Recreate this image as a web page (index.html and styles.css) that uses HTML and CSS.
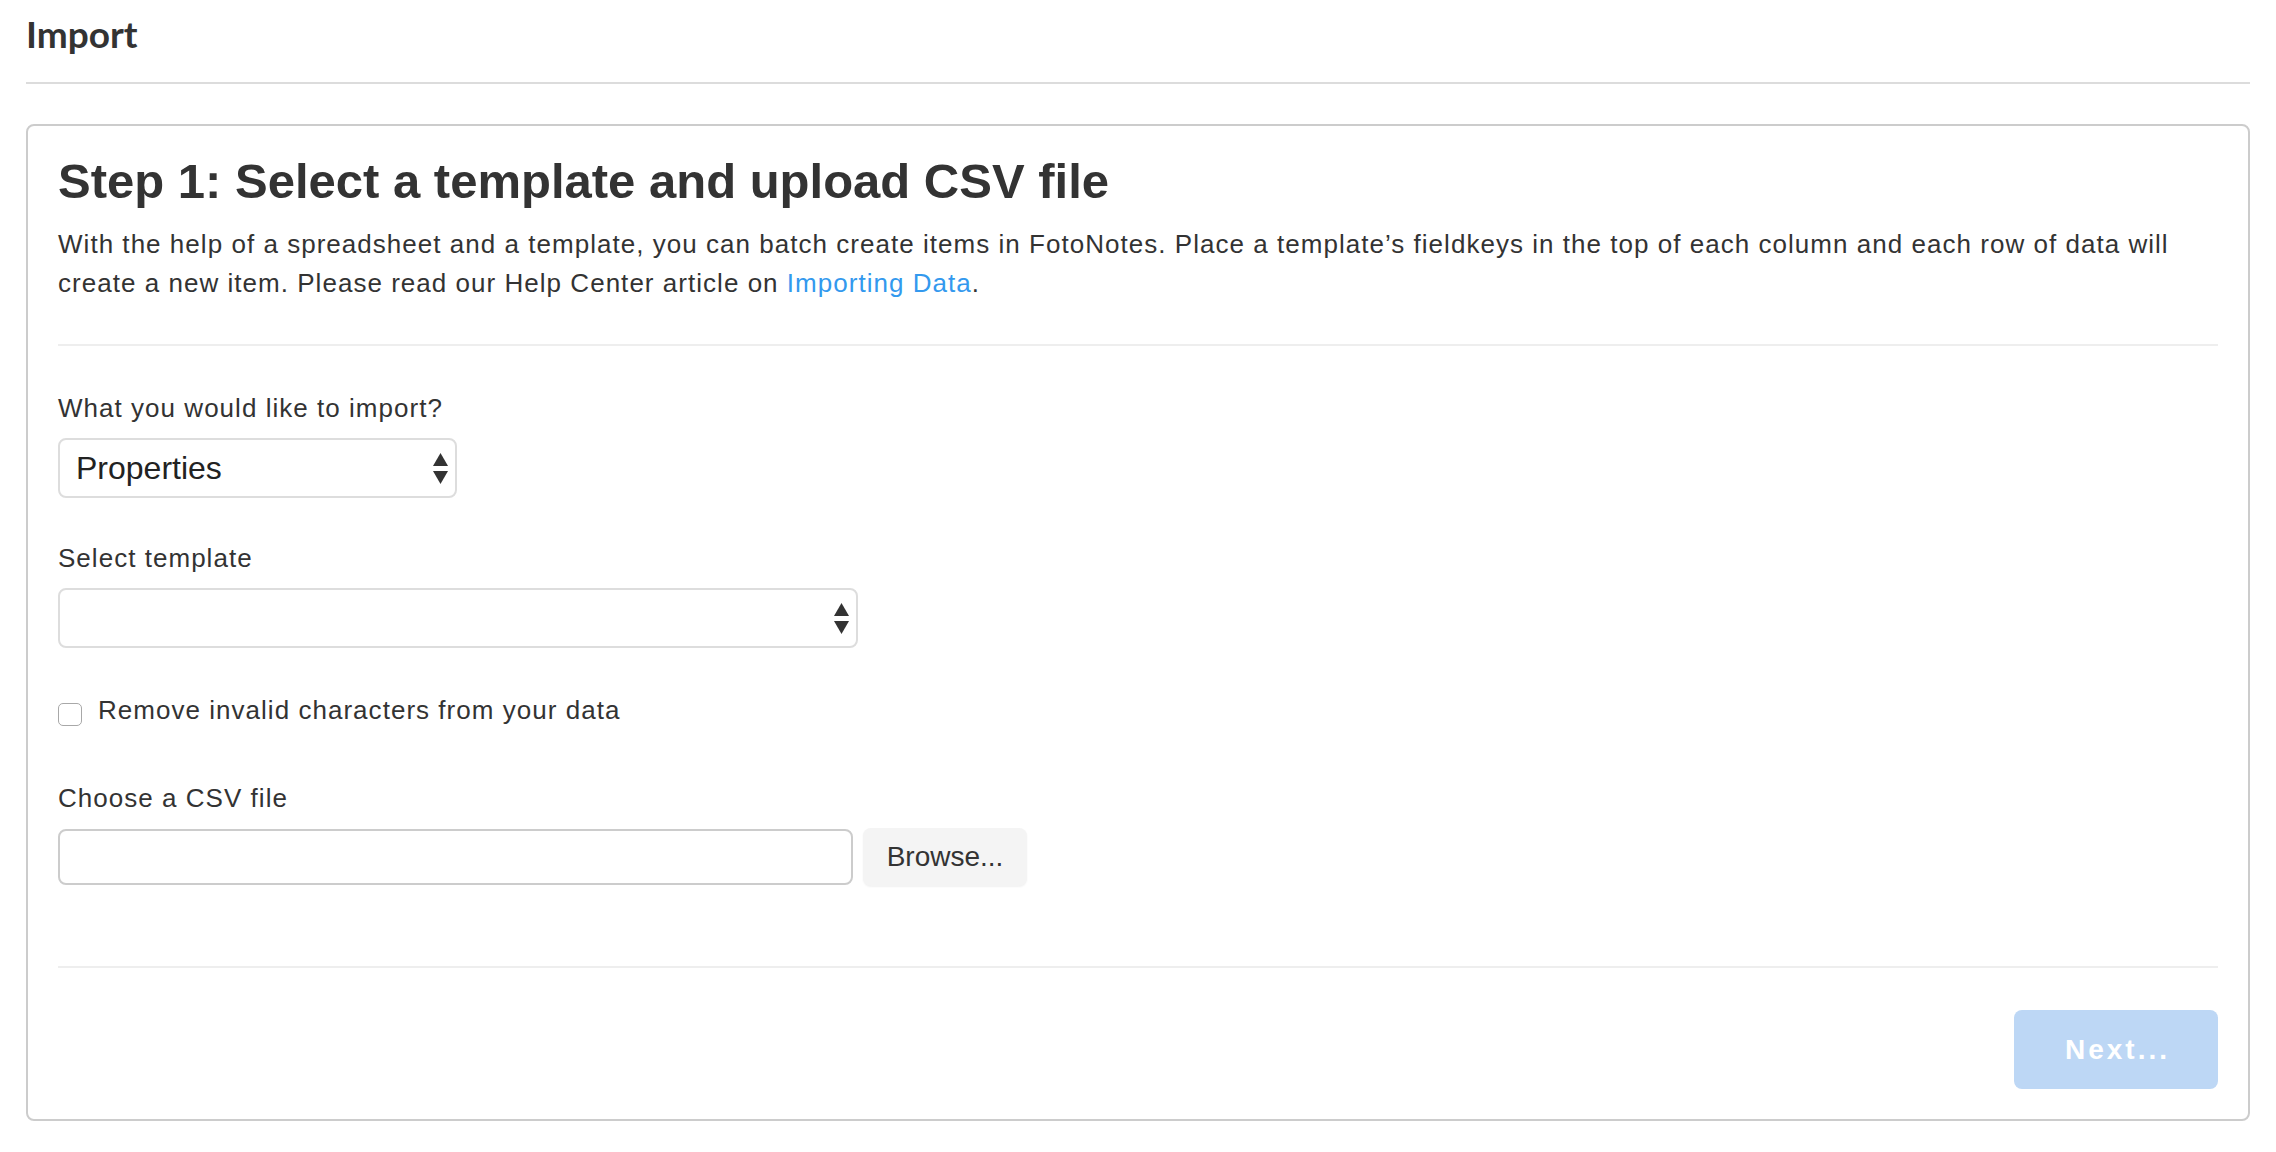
FILE: index.html
```html
<!DOCTYPE html>
<html lang="en">
<head>
<meta charset="utf-8">
<title>Import</title>
<link rel="stylesheet" href="styles.css">
</head>
<body>
<div class="page">
  <h1 class="page-title">Import</h1>
  <div class="title-rule"></div>
  <div class="card">
    <h2 class="step-title">Step 1: Select a template and upload CSV file</h2>
    <p class="intro">With the help of a spreadsheet and a template, you can batch create items in FotoNotes. Place a template’s fieldkeys in the top of each column and each row of data will create a new item. Please read our Help Center article on <a class="link" href="#">Importing Data</a>.</p>
    <div class="rule rule-top"></div>
    <div class="form">
      <div class="group">
        <label class="label">What you would like to import?</label>
        <div class="select-wrap select-small">
          <select class="select"><option>Properties</option></select>
          <svg class="arrows" width="15" height="32" viewBox="0 0 15 32"><polygon points="7.5,0 15,13 0,13"/><polygon points="0,18 15,18 7.5,31"/></svg>
        </div>
      </div>
      <div class="group">
        <label class="label">Select template</label>
        <div class="select-wrap select-wide">
          <select class="select"><option></option></select>
          <svg class="arrows" width="15" height="32" viewBox="0 0 15 32"><polygon points="7.5,0 15,13 0,13"/><polygon points="0,18 15,18 7.5,31"/></svg>
        </div>
      </div>
      <div class="group check-group">
        <input type="checkbox" class="checkbox" id="rm">
        <label class="check-label" for="rm">Remove invalid characters from your data</label>
      </div>
      <div class="group file-group">
        <label class="label">Choose a CSV file</label>
        <div class="file-row">
          <input type="text" class="file-input" readonly>
          <button class="browse" type="button">Browse...</button>
        </div>
      </div>
    </div>
    <div class="rule rule-bottom"></div>
    <div class="actions">
      <button class="next" type="button">Next...</button>
    </div>
  </div>
</div>
</body>
</html>
```

FILE: styles.css
```css
html, body {
  margin: 0;
  padding: 0;
  background: #fff;
}
body {
  font-family: "Liberation Sans", Arial, Helvetica, sans-serif;
  color: #333;
}
.page {
  padding: 0 26px;
}
.page-title {
  font-family: Lato, "Liberation Sans", sans-serif;
  font-weight: 700;
  font-size: 37px;
  line-height: 43px;
  margin: 12px 0 27px;
  color: #333;
}
.title-rule {
  height: 2px;
  background: #dcdcdc;
}
.card {
  margin-top: 40px;
  border: 2px solid #cccccc;
  border-radius: 8px;
  padding: 28px 30px 30px;
}
.step-title {
  font-size: 49px;
  font-weight: 700;
  line-height: 55px;
  margin: 0 0 16px;
  color: #333;
}
.intro {
  font-size: 26px;
  line-height: 39px;
  letter-spacing: 1.03px;
  margin: 0;
}
.link {
  color: #3399ee;
  text-decoration: none;
}
.rule {
  height: 2px;
  background: #eeeeee;
}
.rule-top {
  margin-top: 41px;
}
.form {
  padding-top: 43px;
}
.group {
  margin-bottom: 41px;
}
.label {
  display: block;
  font-size: 26px;
  line-height: 39px;
  letter-spacing: 1.03px;
  margin-bottom: 10px;
}
.select-wrap {
  position: relative;
  height: 60px;
}
.select-small { width: 399px; }
.select-wide { width: 800px; }
.select {
  appearance: none;
  -webkit-appearance: none;
  box-sizing: border-box;
  width: 100%;
  height: 60px;
  border: 2px solid #dddddd;
  border-radius: 8px;
  background: #fff;
  font-family: "Liberation Sans", Arial, sans-serif;
  font-size: 32px;
  line-height: 56px;
  color: #222;
  padding: 0 40px 0 16px;
  margin: 0;
}
.arrows {
  position: absolute;
  right: 9px;
  top: 15px;
  fill: #333;
  pointer-events: none;
}
.check-group {
  display: flex;
  align-items: flex-start;
  margin-top: 43px;
  margin-bottom: 49px;
}
.checkbox {
  appearance: none;
  -webkit-appearance: none;
  box-sizing: border-box;
  width: 24px;
  height: 23px;
  margin: 12px 16px 0 0;
  border: 1.5px solid #a8a8a8;
  border-radius: 5px;
  background: #fff;
  flex: none;
}
.check-label {
  font-size: 26px;
  line-height: 39px;
  letter-spacing: 1.03px;
}
.file-group {
  margin-bottom: 80px;
}
.file-row {
  display: flex;
  align-items: center;
  gap: 10px;
}
.file-input {
  box-sizing: border-box;
  width: 795px;
  height: 56px;
  border: 2px solid #cccccc;
  border-radius: 8px;
  background: #fff;
  margin: 0;
  padding: 0 12px;
  font-size: 28px;
}
.browse {
  box-sizing: border-box;
  width: 164px;
  height: 58px;
  border: none;
  border-radius: 8px;
  background: #f4f4f4;
  box-shadow: 0 1px 2px rgba(0, 0, 0, 0.06);
  font-family: "Liberation Sans", Arial, sans-serif;
  font-size: 28px;
  line-height: 58px;
  color: #333;
  padding: 0;
  margin: 0;
}
.actions {
  display: flex;
  justify-content: flex-end;
  margin-top: 42px;
}
.next {
  width: 204px;
  height: 79px;
  border: none;
  border-radius: 8px;
  background: #bdd7f5;
  color: #fff;
  font-family: "Liberation Sans", Arial, sans-serif;
  font-weight: 700;
  font-size: 28px;
  letter-spacing: 3px;
  line-height: 79px;
  padding: 0 0 0 3px;
  margin: 0;
}
```
